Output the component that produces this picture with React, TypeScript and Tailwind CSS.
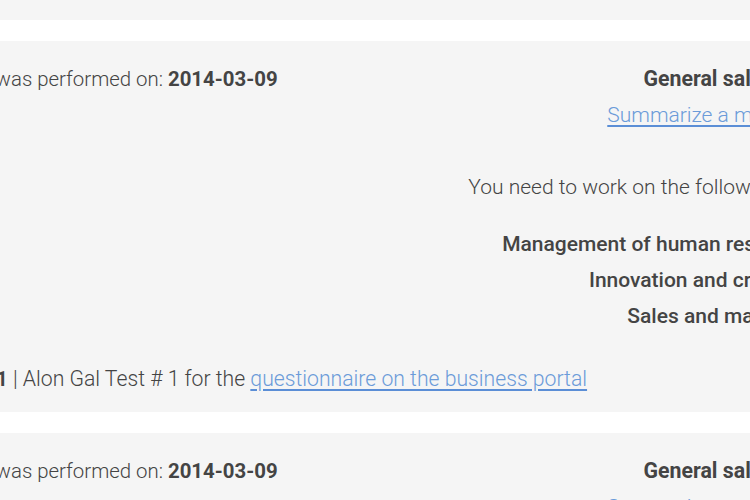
import React from "react";

const font = { fontFamily: "Roboto, 'Noto Sans', sans-serif" };

function Card() {
  return (
    <div className="bg-[#f5f5f5] pt-[20px] pb-[15px] pl-[72px] pr-[51px] leading-[36px] text-[#444] whitespace-nowrap">
      <div className="flex justify-between">
        <div className="font-light text-[20.4px]">
          Test was performed on: <span className="font-bold">2014-03-09</span>
        </div>
        <div className="flex flex-col items-end text-right text-[21px]">
          <div className="font-bold text-[21.3px] mr-[4px]">General salesman</div>
          <a className="font-light mr-[10px] text-[#6b9bd9] underline decoration-[#5b8ed6] underline-offset-[3px]" href="#">
            Summarize a meeting
          </a>
          <div className="font-light mt-[36px] mr-[10px]">You need to work on the following (3)</div>
          <div className="mt-[21px] font-medium">Management of human resources</div>
          <div className="font-medium">Innovation and creativity</div>
          <div className="font-medium">Sales and marketing</div>
        </div>
      </div>
      <div className="mt-[27px] font-light text-[21.2px]">
        <span className="font-bold text-[20px]">Test 1</span> | Alon Gal Test # 1 for the{" "}
        <a className="text-[#6b9bd9] underline decoration-[#5b8ed6] underline-offset-[3px]" href="#">
          questionnaire on the business portal
        </a>
      </div>
    </div>
  );
}

export default function App() {
  return (
    <div className="w-[750px] h-[500px] overflow-hidden bg-white" style={font}>
      <div className="ml-[-120px] w-[990px] flex flex-col gap-[21px]">
        <div className="h-[20px] bg-[#f5f5f5]" />
        <Card />
        <Card />
      </div>
    </div>
  );
}
